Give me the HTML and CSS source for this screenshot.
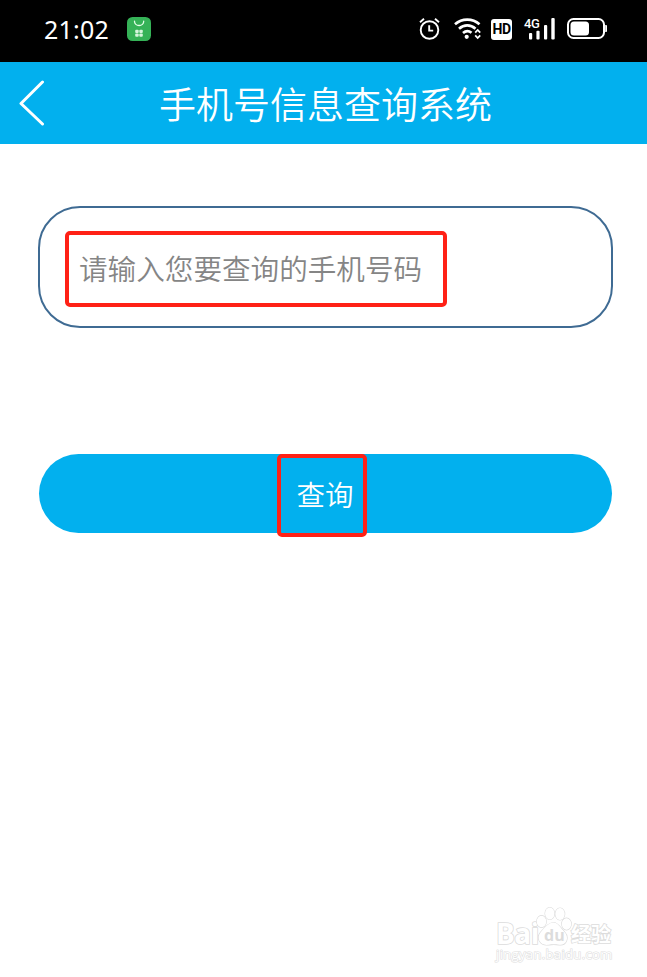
FILE: index.html
```html
<!DOCTYPE html>
<html lang="zh-CN">
<head>
    <meta charset="UTF-8">
    <meta name="viewport" content="width=device-width, initial-scale=1.0">
    <title>手机号信息查询系统</title>
    <link rel="stylesheet" href="styles.css">
</head>
<body>
    <div class="status-bar">
        <span class="time">21:02</span>
        <svg class="app-icon" width="24" height="24" viewBox="0 0 24 24">
            <rect width="24" height="24" rx="5.5" fill="#35b257"/>
            <path d="M7.500 4.200a4.600 4.300 0 0 0 9.200 0" fill="none" stroke="#e5ffe9" stroke-width="1.3" stroke-linecap="round"/>
            <g fill="#d5f5dc">
                <rect x="8.2" y="12.7" width="3.5" height="3.2" rx="1"/>
                <rect x="12.3" y="12.7" width="3.5" height="3.2" rx="1"/>
                <rect x="8.2" y="16.5" width="3.5" height="3.2" rx="1"/>
                <rect x="12.3" y="16.5" width="3.5" height="3.2" rx="1"/>
            </g>
        </svg>
        <div class="status-icons">
            <svg class="alarm" width="22" height="24" viewBox="0 0 22 24" fill="none" stroke="#fff" stroke-width="1.9">
                <circle cx="10.5" cy="13" r="8.8"/>
                <path d="M10.200 8.300v5.300h4M1 5.200l4-3.400M16 1.800l4 3.400"/>
            </svg>
            <svg class="wifi" width="28" height="22" viewBox="0 0 28 22" fill="none" stroke="#fff" stroke-width="2.7">
                <path d="M1 6.200c7-6.100 17.500-6.100 24.500 0M5 10.700c5-4.400 11.500-4.400 16.500 0M9 15c2.800-2.400 5.800-2.400 8.500-.2"/>
                <circle cx="12.7" cy="18.8" r="2.1" fill="#fff" stroke="none"/>
                <path d="M21.200 14.600l2.500-2.600 2.500 2.600M21.200 17.400l2.500 2.600 2.500-2.600" stroke-width="1.8"/>
            </svg>
            <span class="hd">HD</span>
            <div class="signal">
                <span class="network">4G</span>
                <svg width="32" height="22" viewBox="0 0 32 22" fill="#fff">
                    <rect x="5" y="15" width="3.2" height="6.5" rx="1"/>
                    <rect x="12.4" y="12.8" width="3.2" height="8.7" rx="1"/>
                    <rect x="20" y="7" width="3.2" height="14.5" rx="1"/>
                    <rect x="27.3" y="0" width="3.4" height="21.5" rx="1"/>
                </svg>
            </div>
            <svg class="battery" width="41" height="22" viewBox="0 0 41 22">
                <rect x="1" y="1" width="36" height="19" rx="5.5" fill="none" stroke="#fff" stroke-width="2"/>
                <rect x="3.5" y="3.5" width="18.5" height="14" rx="3.5" fill="#fff"/>
                <path d="M38.200 7h1a1 1 0 0 1 .8 1v5a1 1 0 0 1-.8 1h-1z" fill="#fff"/>
            </svg>
        </div>
    </div>

    <header class="nav">
        <svg class="back" width="26" height="48" viewBox="0 0 26 48">
            <path d="M23.500 3L2 24.500 23.500 45" fill="none" stroke="#fff" stroke-width="3" stroke-linecap="round" stroke-linejoin="round"/>
        </svg>
        <h1>手机号信息查询系统</h1>
    </header>

    <main class="content">
        <div class="input-box">
            <div class="mark mark-input"><span class="placeholder">请输入您要查询的手机号码</span></div>
        </div>
        <button class="query-button"><span class="mark mark-button">查询</span></button>
    </main>

    <div class="watermark">
        <div class="brand">
            <span class="bai">Bai</span>
            <div class="paw">
                <svg width="36" height="40" viewBox="0 0 36 40" fill="#fff" stroke="#dcdcdc" stroke-width="1.2">
                    <ellipse cx="5.5" cy="15.5" rx="4.7" ry="5.8"/>
                    <ellipse cx="13.8" cy="7.5" rx="4.7" ry="6"/>
                    <ellipse cx="24" cy="8" rx="4.7" ry="6"/>
                    <ellipse cx="30.5" cy="18" rx="4.7" ry="5.8"/>
                    <path d="M17.500 16.500c4 0 6 4 11 9.500 5 5.500 2 13.500-5 12.800-5-.6-7-.6-11 0C4 40 0 32 4.500 26.500 9 21 13 16.500 17.500 16.500z"/>
                </svg>
                <span class="du">du</span>
            </div>
            <span class="jingyan">经验</span>
        </div>
        <div class="site">jingyan.baidu.com</div>
    </div>
</body>
</html>
```

FILE: styles.css
```css
:root {
    --primary-color: #02b0ee;
    --border-color: #3f6b93;
    --mark-color: #ff2116;
    --placeholder-color: #858585;
}

* {
    box-sizing: border-box;
}

body {
    position: relative;
    height: 977px;
    margin: 0;
    overflow: hidden;
    background-color: #fff;
    font-family: "Noto Sans CJK SC", sans-serif;
}

.status-bar {
    display: flex;
    align-items: center;
    height: 62px;
    padding: 0 39px 4px 44px;
    background-color: #000;
    color: #fff;
}

.time {
    width: 83px;
    font-family: "Noto Sans", sans-serif;
    font-size: 25px;
    letter-spacing: 0.2px;
}

.status-icons {
    display: flex;
    align-items: center;
    margin-left: auto;
}

.alarm {
    margin-right: 13px;
}

.wifi {
    margin-right: 9px;
}

.hd {
    width: 21px;
    height: 21px;
    margin-right: 12px;
    border-radius: 3px;
    background-color: #fff;
    color: #000;
    font: bold 14px/21px "Roboto", sans-serif;
    letter-spacing: -0.5px;
    text-align: center;
}

.signal {
    position: relative;
    height: 22px;
    margin-right: 11px;
}

.network {
    position: absolute;
    top: -1px;
    left: 0;
    font: 500 13px/13px "Roboto", sans-serif;
    letter-spacing: -0.5px;
}

.nav {
    display: flex;
    align-items: center;
    height: 82px;
    padding-left: 19px;
    background-color: var(--primary-color);
    color: #fff;
}

.nav h1 {
    margin: 0 0 0 114px;
    font-size: 37px;
    font-weight: 350;
    line-height: 80px;
}

.content {
    padding: 62px 34px 0 38px;
}

.input-box {
    display: flex;
    align-items: center;
    height: 122px;
    padding: 4px 0 0 25px;
    border: 2px solid var(--border-color);
    border-radius: 42px;
}

/* Red frames around the highlighted controls */
.mark {
    border: 4px solid var(--mark-color);
    border-radius: 5px;
}

.mark-input {
    width: 382px;
    height: 76px;
    padding-left: 10px;
    color: var(--placeholder-color);
    font-size: 28.6px;
    font-weight: 350;
    line-height: 65px;
    white-space: nowrap;
}

.query-button {
    display: flex;
    align-items: center;
    justify-content: center;
    width: 573px;
    height: 79px;
    margin: 126px 0 0 1px;
    padding: 0;
    border: none;
    border-radius: 40px;
    background-color: var(--primary-color);
    color: #fff;
    font-family: inherit;
}

.mark-button {
    flex: none;
    width: 90px;
    height: 83px;
    margin: 4px 7px 0 0;
    padding-left: 6px;
    font-size: 28.5px;
    font-weight: 350;
    line-height: 72px;
}

.watermark {
    position: absolute;
    top: 906px;
    left: 496px;
    width: 120px;
    color: #fff;
    font-family: "Open Sans", sans-serif;
    font-weight: bold;
    -webkit-text-stroke: 1.6px #dcdcdc;
    paint-order: stroke fill;
}

.brand {
    display: flex;
    align-items: flex-end;
    height: 40px;
}

.bai {
    width: 40px;
    font-size: 28px;
    line-height: 26px;
    letter-spacing: -0.5px;
}

.paw {
    position: relative;
    width: 35px;
    height: 40px;
}

.du {
    position: absolute;
    top: 19px;
    left: 8px;
    color: #dcdcdc;
    font-size: 16px;
    line-height: 20px;
    -webkit-text-stroke: 0;
}

.jingyan {
    font-family: "Noto Sans CJK SC", sans-serif;
    font-size: 20px;
    line-height: 24px;
}

.site {
    margin-top: 1px;
    font-size: 13px;
    font-weight: normal;
    line-height: 15px;
    letter-spacing: 0.35px;
    white-space: nowrap;
    -webkit-text-stroke: 1.2px #dedede;
}
```
